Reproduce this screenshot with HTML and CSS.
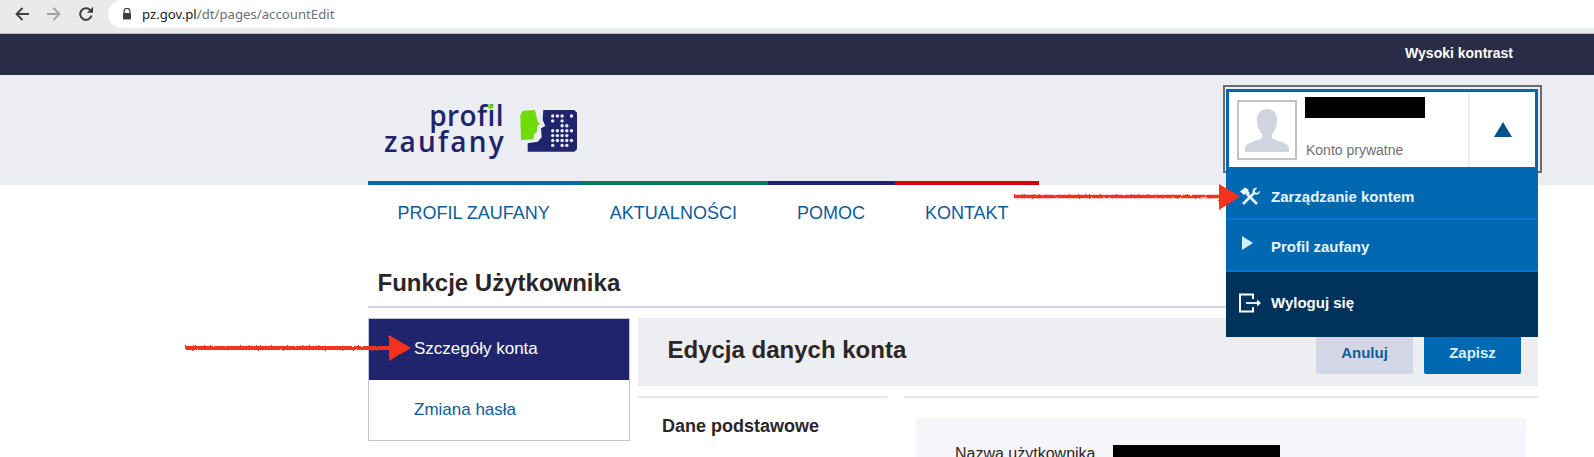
FILE: index.html
```html
<!DOCTYPE html>
<html lang="pl">
<head>
    <meta charset="UTF-8">
    <meta name="viewport" content="width=device-width, initial-scale=1.0">
    <title>Profil Zaufany</title>
    <link rel="stylesheet" href="styles.css">
</head>
<body>
    <div class="browser-bar">
        <svg class="nav-icon" viewBox="0 0 16 16"><path d="M15 8H2.500M8.500 2 2.500 8l6 6" fill="none" stroke="#3c4043" stroke-width="1.800"/></svg>
        <svg class="nav-icon" viewBox="0 0 16 16"><path d="M1 8h12.500M7.500 2l6 6-6 6" fill="none" stroke="#a0a3a6" stroke-width="1.800"/></svg>
        <svg class="nav-icon" viewBox="0 0 16 16"><path d="M13.600 9.600A5.800 5.800 0 1 1 12.200 4" fill="none" stroke="#3c4043" stroke-width="2"/><path d="M9 6.800h6V.8z" fill="#3c4043"/></svg>
        <div class="omnibox">
            <svg class="lock" viewBox="0 0 10 12"><path d="M2 5V3.400a3 3 0 0 1 6 0V5" fill="none" stroke="#3c4043" stroke-width="1.300"/><rect x="1" y="5" width="8" height="6.600" rx="1" fill="#3c4043"/></svg>
            <span class="url"><b>pz.gov.pl</b>/dt/pages/accountEdit</span>
        </div>
    </div>

    <div class="contrast-bar"><a class="contrast-link">Wysoki kontrast</a></div>

    <header class="site-header">
        <div class="wrap">
            <div class="logo">
                <div class="logo-text">
                    <span class="logo-top">profil<i class="logo-dot"></i></span>
                    <span class="logo-bottom">zaufany</span>
                </div>
                <svg class="logo-mark" width="58" height="42" viewBox="0 0 58 42">
                    <path d="M2.700.7 15 0l2.700 11.700L20 14l-3 2v5.700L13.700 25v4.300L1 30 .3 5z" fill="#6fdc0a"/>
                    <path d="M23.300 0h31l2.700 2.700v36.600l-2.700 2.400H7.700v-8.400l10-1.600 4-4.400-.7-9 4.300-2.300-2.600-6z" fill="#20246c"/>
                    <g fill="#e8eaf2" id="dots"></g>
                </svg>
            </div>
            <div class="stripes">
                <i class="stripe-blue"></i><i class="stripe-green"></i><i class="stripe-navy"></i><i class="stripe-red"></i>
            </div>
        </div>
    </header>

    <main class="wrap">
        <nav class="main-nav">
            <a>PROFIL ZAUFANY</a>
            <a>AKTUALNOŚCI</a>
            <a>POMOC</a>
            <a>KONTAKT</a>
        </nav>

        <h1 class="page-title">Funkcje Użytkownika</h1>

        <div class="columns">
            <ul class="side-menu">
                <li class="active">Szczegóły konta</li>
                <li>Zmiana hasła</li>
            </ul>
            <section class="panel">
                <div class="panel-head">
                    <h2>Edycja danych konta</h2>
                    <div class="actions">
                        <button class="btn btn-cancel">Anuluj</button>
                        <button class="btn btn-save">Zapisz</button>
                    </div>
                </div>
                <div class="panel-body">
                    <div class="section-label">Dane podstawowe</div>
                    <div class="section-content">
                        <div class="field-box">
                            <div class="field-row">
                                <span class="field-name">Nazwa użytkownika</span>
                                <span class="redacted field-value"></span>
                            </div>
                        </div>
                    </div>
                </div>
            </section>
        </div>
    </main>

    <div class="account">
        <div class="account-box">
            <div class="avatar">
                <svg width="44" height="43" viewBox="0 0 44 43"><path d="M22 0c6 0 10 4 10 11 0 6-2 11-5 14v4c4 3 15 4 17 9v5H0v-5c2-5 13-6 17-9v-4c-3-3-5-8-5-14C12 4 16 0 22 0z" fill="#d0d4de"/></svg>
            </div>
            <div class="account-info">
                <span class="redacted account-name"></span>
                <span class="account-type">Konto prywatne</span>
            </div>
            <div class="account-toggle"><i class="triangle"></i></div>
        </div>
        <ul class="account-menu">
            <li class="manage">
                <svg class="menu-icon" viewBox="0 0 22 20"><path d="M1 5.500 6 1.500 10 4 9 5 11 7 8.500 9.500 6.500 7.500 5 9z" fill="#e6f6fb"/><path d="M7.500 7.500 18 18" stroke="#e6f6fb" stroke-width="2.600" fill="none"/><path d="M4 18 15 7" stroke="#e6f6fb" stroke-width="2.600" fill="none"/><path d="M18.500 1.800 15.800 4.500l.6 2 2 .6L21 4.400c.2 2.600-2 5-5 4.200L13.600 6c-.6-2.800 2-5 4.900-4.200z" fill="#e6f6fb"/></svg>
                Zarządzanie kontem
            </li>
            <li class="profile">
                <svg class="menu-icon" viewBox="0 0 22 20"><path d="M3 0l11 7L3 14z" fill="#d3f1f8"/></svg>
                Profil zaufany
            </li>
            <li class="logout">
                <svg class="menu-icon" viewBox="0 0 22 20"><path d="M14 6V1.500H1v17h13V14" fill="none" stroke="#fff" stroke-width="2"/><path d="M7 10h12" stroke="#fff" stroke-width="1.800" fill="none"/><path d="M18 6.500l4 3.500-4 3.500z" fill="#fff"/></svg>
                Wyloguj się
            </li>
        </ul>
    </div>

    <svg class="arrow arrow-top" width="226" height="26" viewBox="0 0 226 26">
        <defs>
            <filter id="rough" x="-2%" y="-20%" width="104%" height="140%">
                <feTurbulence type="fractalNoise" baseFrequency="0.4" numOctaves="2" seed="3"/>
                <feDisplacementMap in="SourceGraphic" scale="2.500"/>
            </filter>
        </defs>
        <g filter="url(#rough)">
            <path d="M0 12.500h208" stroke="#f5331a" stroke-width="3.500"/>
            <path d="M205 0l21 12.500L205 26z" fill="#f5331a"/>
        </g>
    </svg>
    <svg class="arrow arrow-left" width="226" height="26" viewBox="0 0 226 26">
        <g filter="url(#rough)">
            <path d="M0 13h208" stroke="#f5331a" stroke-width="4"/>
            <path d="M204 0l22 13-22 13z" fill="#f5331a"/>
        </g>
    </svg>

    <script>
        // logo dot matrix, one string per row
        const pattern = ['11101', '10100', '00110', '11111', '11110', '11111', '10110'];
        let html = '';
        pattern.forEach((row, r) => {
            [...row].forEach((on, c) => {
                if (on === '1') html += `<circle cx="${32.7 + c * 4.7}" cy="${6 + r * 4.9}" r="1.700"/>`;
            });
        });
        document.getElementById('dots').innerHTML = html;
    </script>
</body>
</html>
```

FILE: styles.css
```css
* {
    box-sizing: border-box;
}

html, body {
    height: 457px;
    overflow: hidden;
}

body {
    margin: 0;
    position: relative;
    font-family: "Liberation Sans", Arial, sans-serif;
    background: #fff;
    color: #222;
}

.wrap {
    width: 1170px;
    margin-left: 368px;
}

.browser-bar {
    height: 34px;
    background: #e8eaeb;
    display: flex;
    align-items: center;
    padding-left: 14px;
    gap: 16px;
    border-bottom: 1px solid #b9babd;
}

.nav-icon {
    width: 16px;
    height: 16px;
    flex: none;
    margin-top: -5px;
}

.omnibox {
    flex: 1;
    height: 28px;
    margin-left: -2px;
    margin-top: -5px;
    background: #fff;
    border-radius: 14px 0 0 14px;
    display: flex;
    align-items: center;
    padding-left: 14px;
    gap: 10px;
}

.lock {
    width: 10px;
    height: 12px;
}

.url {
    font-family: "Noto Sans", sans-serif;
    font-size: 13.200px;
    color: #6b7074;
}

.url b {
    font-weight: 400;
    color: #202124;
}

.contrast-bar {
    height: 41px;
    background: #2a2b47;
    display: flex;
    align-items: center;
    justify-content: flex-end;
    padding: 0 81px 3px 0;
}

.contrast-link {
    color: #fff;
    font-size: 14px;
    font-weight: 700;
}

.site-header {
    height: 110px;
    background: #ecedf3;
}

.site-header .wrap {
    height: 100%;
    display: flex;
    flex-direction: column;
    justify-content: space-between;
}

.logo {
    display: flex;
    gap: 14px;
    padding: 27px 0 0 17px;
}

.logo-text {
    display: flex;
    flex-direction: column;
    align-items: flex-end;
    font-family: "Open Sans", sans-serif;
    font-size: 28px;
    font-weight: 600;
    line-height: 26px;
    color: #20246c;
}

.logo-top {
    position: relative;
    letter-spacing: .4px;
    margin-right: 2px;
}

.logo-bottom {
    letter-spacing: 2.200px;
    margin-left: -1px;
}

/* the dot of the i is green in the logo */
.logo-dot {
    position: absolute;
    right: 11px;
    top: 2px;
    width: 5px;
    height: 5px;
    border-radius: 50%;
    background: #6fdc0a;
}

.logo-mark {
    margin-top: 8px;
}

.stripes {
    display: flex;
    width: 671px;
    height: 4px;
}

.stripes i {
    display: block;
}

.stripe-blue { width: 212px; background: #0067b1; }
.stripe-green { width: 188px; background: #047b5e; }
.stripe-navy { width: 127px; background: #20246c; }
.stripe-red { width: 144px; background: #d5000d; }

.main-nav {
    display: flex;
    gap: 60px;
    padding: 18px 0 0 29.500px;
    font-size: 18px;
    line-height: 21px;
    color: #0c5c9c;
}

.page-title {
    margin: 45px 0 0 9.500px;
    font-size: 24px;
    line-height: 28px;
    color: #2a2626;
}

.columns {
    display: flex;
    gap: 8px;
    margin-top: 9px;
    border-top: 2px solid #d3d4e8;
    padding-top: 10px;
}

.side-menu {
    width: 262px;
    height: 123px;
    margin: 0;
    padding: 0;
    list-style: none;
    border: 1px solid #c0c6d8;
    flex: none;
}

.side-menu li {
    height: 60.500px;
    padding-left: 45px;
    display: flex;
    align-items: center;
    font-size: 17px;
    color: #0c5c9c;
}

.side-menu .active {
    background: #20246c;
    color: #fff;
}

.panel {
    flex: 1;
}

.panel-head {
    height: 68px;
    background: #edeef2;
    display: flex;
    align-items: flex-start;
    justify-content: space-between;
    padding: 12px 17px 0 29.500px;
}

.panel-head h2 {
    margin: 6px 0 0;
    font-size: 24px;
    color: #2a2626;
}

.actions {
    display: flex;
    gap: 11px;
}

.btn {
    width: 97px;
    height: 44px;
    border: 0;
    border-radius: 2px;
    font-family: inherit;
    font-size: 15px;
    font-weight: 700;
}

.btn-cancel {
    background: #d2d6e5;
    color: #0c5c9c;
}

.btn-save {
    background: #0067b1;
    color: #d9f0f8;
}

.panel-body {
    display: flex;
    gap: 17px;
    margin-top: 10px;
}

.section-label {
    width: 249px;
    border-top: 2px solid #e6e7eb;
    padding: 18px 0 0 24px;
    font-size: 18px;
    line-height: 21px;
    font-weight: 700;
    color: #2a2626;
}

.section-content {
    flex: 1;
    border-top: 2px solid #e6e7eb;
    padding: 20px 12px 0;
}

.field-box {
    height: 60px;
    background: #f6f6fa;
    padding: 27px 0 0 39px;
}

.field-row {
    display: flex;
    gap: 17px;
    align-items: flex-start;
}

.field-name {
    font-size: 16px;
    line-height: 18px;
    color: #2a2626;
}

.redacted {
    display: block;
    background: #000;
}

.field-value {
    width: 167px;
    height: 18px;
}

/* account dropdown lies over the header and the panel */
.account {
    position: absolute;
    left: 1226px;
    top: 89px;
    width: 312px;
}

.account::before {
    content: "";
    box-sizing: border-box;
    position: absolute;
    left: -3px;
    top: -4px;
    width: 319px;
    height: 88px;
    border: 2px solid #6c6d70;
}

.account-box {
    position: relative;
    height: 78px;
    background: #fff;
    border: 3px solid #0067b1;
    border-bottom: 0;
    display: flex;
}

.avatar {
    width: 60px;
    height: 60px;
    margin: 8px 0 0 8px;
    border: 2px solid #c3c3c3;
    display: flex;
    align-items: flex-end;
    justify-content: center;
    padding-bottom: 6px;
    flex: none;
}

.account-info {
    flex: 1;
    padding: 5px 0 0 9px;
    display: flex;
    flex-direction: column;
}

.account-name {
    width: 120px;
    height: 21px;
    margin-left: -1px;
}

.account-type {
    margin-top: 24px;
    font-size: 14px;
    line-height: 16px;
    color: #6f6f76;
}

.account-toggle {
    width: 67px;
    border-left: 2px solid #ecedf3;
    display: flex;
    align-items: center;
    justify-content: center;
}

.triangle {
    border-left: 9.500px solid transparent;
    border-right: 9.500px solid transparent;
    border-bottom: 15px solid #00508c;
}

.account-menu {
    position: relative;
    margin: 0;
    padding: 0;
    list-style: none;
    background: #0067b1;
    color: #e6f6fb;
    font-size: 15px;
    font-weight: 700;
}

.account-menu li {
    height: 52px;
    display: flex;
    align-items: center;
    gap: 10px;
    padding-left: 13px;
    border-bottom: 2px solid #0b74d6;
}

.account-menu .manage {
    height: 53px;
    padding-top: 7px;
}

.account-menu .profile {
    padding-top: 2px;
}

.account-menu .logout {
    height: 65px;
    padding-bottom: 4px;
    background: #00335c;
    border-bottom: 0;
    color: #fff;
}

.menu-icon {
    width: 22px;
    height: 20px;
    flex: none;
}

/* red annotation arrows drawn on top of the screenshot */
.arrow {
    position: absolute;
}

.arrow-top {
    left: 1014px;
    top: 184px;
}

.arrow-left {
    left: 185px;
    top: 335px;
}
```
